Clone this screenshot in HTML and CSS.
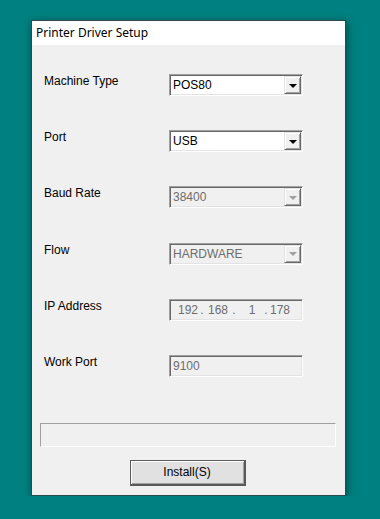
FILE: index.html
```html
<!DOCTYPE html>
<html lang="en">
<head>
    <meta charset="UTF-8">
    <meta name="viewport" content="width=device-width, initial-scale=1.0">
    <title>Printer Driver Setup</title>
    <link rel="stylesheet" href="styles.css">
</head>
<body>

    <!-- Setup dialog -->
    <div class="window">
        <div class="title-bar">Printer Driver Setup</div>

        <div class="content">
            <div class="form">
                <div class="label">Machine Type</div>
                <div class="combo">
                    <span class="combo-text">POS80</span>
                    <span class="combo-btn"><span class="arrow"></span></span>
                </div>

                <div class="label">Port</div>
                <div class="combo">
                    <span class="combo-text">USB</span>
                    <span class="combo-btn"><span class="arrow"></span></span>
                </div>

                <div class="label">Baud Rate</div>
                <div class="combo disabled">
                    <span class="combo-text">38400</span>
                    <span class="combo-btn"><span class="arrow"></span></span>
                </div>

                <div class="label">Flow</div>
                <div class="combo disabled">
                    <span class="combo-text">HARDWARE</span>
                    <span class="combo-btn"><span class="arrow"></span></span>
                </div>

                <div class="label">IP Address</div>
                <div class="field disabled ip">
                    <span class="octet">192</span><span class="dot">.</span><span class="octet wide">168</span><span class="dot">.</span><span class="octet one">1</span><span class="dot">.</span><span class="octet">178</span>
                </div>

                <div class="label">Work Port</div>
                <div class="field disabled">9100</div>
            </div>

            <div class="progress"></div>

            <div class="actions">
                <button type="button" class="button">Install(S)</button>
            </div>
        </div>
    </div>

</body>
</html>
```

FILE: styles.css
```css
/* General Styling */
body {
    margin: 0;
    padding: 20px 0 0 31px;
    background-color: #008080;
    font-family: 'Liberation Sans', Arial, sans-serif;
    font-size: 12px;
    color: #000;
}

/* Dialog window */
.window {
    width: 313px;
    background-color: #f0f0f0;
    border: 1px solid #2b4a4a;
    box-shadow: 1px 2px 8px rgba(0, 0, 0, 0.45);
}

.title-bar {
    height: 24px;
    line-height: 24px;
    padding-left: 4px;
    background-color: #fff;
    font-family: 'Noto Sans', 'Open Sans', sans-serif;
    font-size: 12px;
    color: #000;
}

.content {
    padding: 29px 9px 9px 7px;
}

/* Form grid */
.form {
    display: grid;
    grid-template-columns: 130px 134px;
    grid-auto-rows: 22px;
    row-gap: 34.2px;
}

.label {
    padding-left: 5px;
    line-height: 14px;
    color: #000;
}

/* Sunken 3D boxes */
.combo,
.field {
    box-sizing: border-box;
    height: 22px;
    border-top: 1px solid #a0a0a0;
    border-left: 1px solid #a0a0a0;
    border-right: 1px solid #fff;
    border-bottom: 1px solid #fff;
    box-shadow: inset 1px 1px 0 #696969, inset -1px -1px 0 #e3e3e3;
    background-color: #fff;
    display: flex;
    align-items: center;
}

.combo-text {
    flex: 1;
    padding-left: 3px;
    line-height: 18px;
}

.combo-btn {
    box-sizing: border-box;
    width: 17px;
    height: 18px;
    margin-right: 1px;
    background-color: #f0f0f0;
    border-top: 1px solid #e3e3e3;
    border-left: 1px solid #e3e3e3;
    border-right: 1px solid #696969;
    border-bottom: 1px solid #696969;
    box-shadow: inset 1px 1px 0 #fff, inset -1px -1px 0 #a0a0a0;
    display: flex;
    align-items: center;
    justify-content: center;
}

.arrow {
    width: 0;
    height: 0;
    border-left: 4px solid transparent;
    border-right: 4px solid transparent;
    border-top: 4px solid #000;
    margin-top: 1px;
}

/* Disabled state */
.disabled {
    background-color: #f0f0f0;
    color: #6d6d6d;
}

.disabled .arrow {
    border-top-color: #a0a0a0;
}

.field {
    padding-left: 3px;
}

/* IP address control */
.ip {
    padding-left: 7px;
}

.octet {
    width: 22px;
    text-align: center;
}

.octet.wide {
    width: 26px;
}

.octet.one {
    box-sizing: border-box;
    width: 26px;
    padding-left: 4px;
}

.dot {
    width: 6px;
    text-align: center;
}

/* Status bar */
.progress {
    box-sizing: border-box;
    margin-top: 46px;
    margin-left: 1px;
    height: 24px;
    border-top: 1px solid #a0a0a0;
    border-left: 1px solid #a0a0a0;
    border-right: 1px solid #fff;
    border-bottom: 1px solid #fff;
}

/* Button Styling */
.actions {
    display: flex;
    justify-content: center;
    margin-top: 13px;
}

.button {
    box-sizing: border-box;
    width: 116px;
    height: 26px;
    padding: 0;
    font-family: 'Liberation Sans', Arial, sans-serif;
    font-size: 12px;
    color: #000;
    background-color: #e1e1e1;
    border: 1px solid #5a5a5a;
    border-right-width: 2px;
    border-bottom-width: 2px;
    box-shadow: inset 1px 1px 0 #fff, inset -1px -1px 0 #a0a0a0;
    cursor: pointer;
}
```
